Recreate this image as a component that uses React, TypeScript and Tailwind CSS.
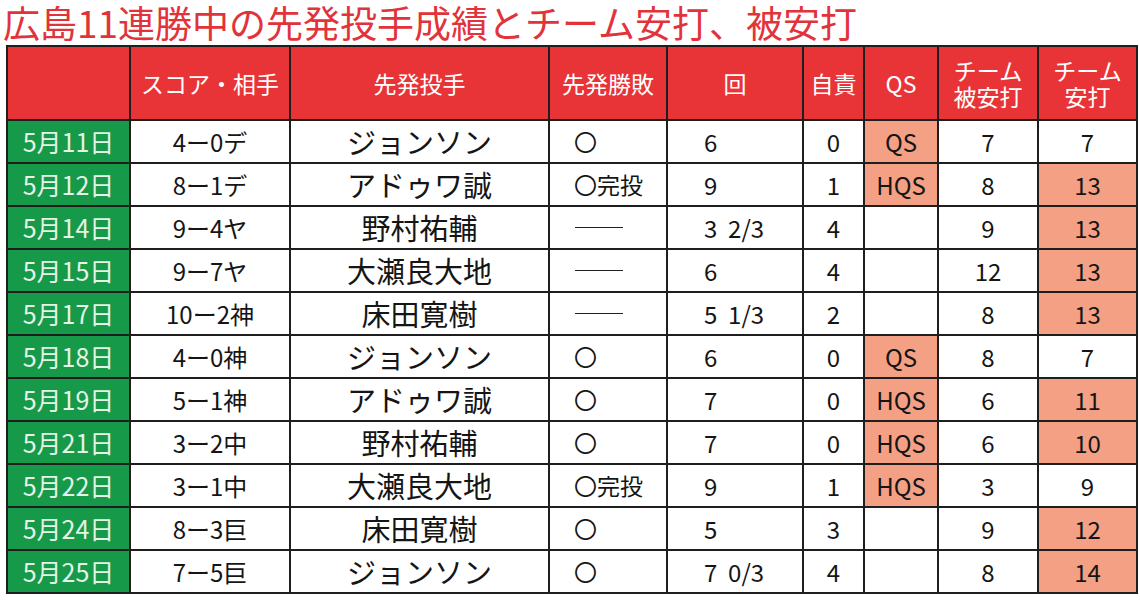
import React from 'react'

type Row = {
  date: string
  score: string
  pitcher: string
  result: string
  inning: string
  er: string
  qs: string
  hitsAllowed: string
  hits: number
}

const rows: Row[] = [
  { date: '5月11日', score: '4ー0デ', pitcher: 'ジョンソン', result: '〇', inning: '6', er: '0', qs: 'QS', hitsAllowed: '7', hits: 7 },
  { date: '5月12日', score: '8ー1デ', pitcher: 'アドゥワ誠', result: '〇完投', inning: '9', er: '1', qs: 'HQS', hitsAllowed: '8', hits: 13 },
  { date: '5月14日', score: '9ー4ヤ', pitcher: '野村祐輔', result: '―', inning: '3  2/3', er: '4', qs: '', hitsAllowed: '9', hits: 13 },
  { date: '5月15日', score: '9ー7ヤ', pitcher: '大瀬良大地', result: '―', inning: '6', er: '4', qs: '', hitsAllowed: '12', hits: 13 },
  { date: '5月17日', score: '10ー2神', pitcher: '床田寛樹', result: '―', inning: '5  1/3', er: '2', qs: '', hitsAllowed: '8', hits: 13 },
  { date: '5月18日', score: '4ー0神', pitcher: 'ジョンソン', result: '〇', inning: '6', er: '0', qs: 'QS', hitsAllowed: '8', hits: 7 },
  { date: '5月19日', score: '5ー1神', pitcher: 'アドゥワ誠', result: '〇', inning: '7', er: '0', qs: 'HQS', hitsAllowed: '6', hits: 11 },
  { date: '5月21日', score: '3ー2中', pitcher: '野村祐輔', result: '〇', inning: '7', er: '0', qs: 'HQS', hitsAllowed: '6', hits: 10 },
  { date: '5月22日', score: '3ー1中', pitcher: '大瀬良大地', result: '〇完投', inning: '9', er: '1', qs: 'HQS', hitsAllowed: '3', hits: 9 },
  { date: '5月24日', score: '8ー3巨', pitcher: '床田寛樹', result: '〇', inning: '5', er: '3', qs: '', hitsAllowed: '9', hits: 12 },
  { date: '5月25日', score: '7ー5巨', pitcher: 'ジョンソン', result: '〇', inning: '7  0/3', er: '4', qs: '', hitsAllowed: '8', hits: 14 },
]

const font = { fontFamily: '"Noto Sans CJK JP", "Noto Sans", sans-serif' }

function Head({ children }: { children: React.ReactNode }) {
  return (
    <div className="bg-[#e93437] text-white text-[23px] leading-[26px] flex items-center justify-center text-center">
      {children}
    </div>
  )
}

export default function App() {
  return (
    <div className="w-[1140px] h-[600px] bg-white overflow-hidden" style={font}>
      <h1 className="h-[45px] pl-[3px] text-[37px] leading-[45px] text-[#e2333a] whitespace-nowrap">
        広島11連勝中の先発投手成績とチーム安打、被安打
      </h1>

      <div className="ml-[6px] w-[1132px] bg-[#1e1e1e] p-[2px] grid grid-cols-[121px_158px_257px_116px_134px_59px_72px_98px_97px] grid-rows-[72px_repeat(11,41px)] gap-[2px] text-[#151515]">
        <Head>{''}</Head>
        <Head>スコア・相手</Head>
        <Head>先発投手</Head>
        <Head>先発勝敗</Head>
        <Head>回</Head>
        <Head>自責</Head>
        <Head>QS</Head>
        <Head>
          チーム
          <br />
          被安打
        </Head>
        <Head>
          チーム
          <br />
          安打
        </Head>

        {rows.map((r) => (
          <React.Fragment key={r.date}>
            <div className="bg-[#17994a] text-[#e4f4e6] text-[25px] flex items-center justify-center">
              {r.date}
            </div>
            <div className="bg-white text-[24px] flex items-center justify-center">{r.score}</div>
            <div className="bg-white text-[29px] flex items-center justify-center">{r.pitcher}</div>
            <div className="bg-white text-[23px] flex items-center pl-[24px]">
              {r.result === '―' ? (
                <span className="block w-[48px] h-[1px] bg-[#222] ml-[1px]" />
              ) : (
                r.result
              )}
            </div>
            <div className="bg-white text-[24px] flex items-center pl-[36px] whitespace-pre">{r.inning}</div>
            <div className="bg-white text-[24px] flex items-center justify-center">{r.er}</div>
            <div
              className={`text-[24px] flex items-center justify-center ${
                r.qs ? 'bg-[#f4a084]' : 'bg-white'
              }`}
            >
              {r.qs}
            </div>
            <div className="bg-white text-[24px] flex items-center justify-center">{r.hitsAllowed}</div>
            <div
              className={`text-[24px] flex items-center justify-center ${
                r.hits >= 10 ? 'bg-[#f4a084]' : 'bg-white'
              }`}
            >
              {r.hits}
            </div>
          </React.Fragment>
        ))}
      </div>
    </div>
  )
}
